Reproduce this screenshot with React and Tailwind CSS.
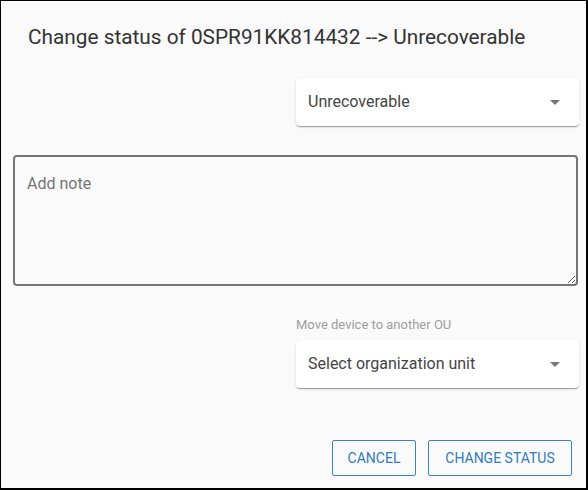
import { useState } from "react";

const STATUSES = ["Active", "Lost", "Unrecoverable"];

function Caret() {
  return (
    <svg viewBox="0 0 24 24" className="w-6 h-6 fill-[#757575] shrink-0">
      <path d="M7 10l5 5 5-5z" />
    </svg>
  );
}

function SelectBox({ value }) {
  return (
    <div className="w-[283px] h-12 bg-white rounded-[4px] shadow-[0_2px_1px_-1px_rgba(0,0,0,0.2),0_1px_1px_0_rgba(0,0,0,0.14),0_1px_3px_0_rgba(0,0,0,0.12)] flex items-center justify-between pl-3 pr-[12px]">
      <span className="text-[16px] text-[#444]">{value}</span>
      <Caret />
    </div>
  );
}

export default function App() {
  const [status] = useState(STATUSES[2]);
  const [note, setNote] = useState("");

  return (
    <div className="w-[588px] h-[490px] bg-[#fafafa] border-l border-t border-r-2 border-b-2 border-black flex flex-col font-['Roboto',sans-serif]">
      <h2 className="pt-[22px] pl-[27px] text-[20.8px] leading-7 text-[#333]">
        Change status of 0SPR91KK814432 --&gt; {status}
      </h2>

      <div className="mt-[27px] pl-[295px]">
        <SelectBox value={status} />
      </div>

      <div className="mt-[29px] pl-3 pr-2">
        <textarea
          value={note}
          onChange={e => setNote(e.target.value)}
          placeholder="Add note"
          className="block w-[565px] h-[131px] border-2 border-[#757575] rounded-[4px] bg-transparent px-3 py-[16px] text-[16px] leading-[22px] text-[#333] placeholder:text-[#757575] outline-none"
        />
      </div>

      <div className="mt-[31px] pl-[295px] text-[13px] leading-4 text-[#9e9e9e]">Move device to another OU</div>
      <div className="mt-[7px] pl-[295px]">
        <SelectBox value="Select organization unit" />
      </div>

      <div className="mt-[52px] flex justify-end gap-3 pr-[14px]">
        <button className="w-[84px] h-[36px] border border-[#3b82c4] rounded-[2px] text-[14px] text-[#2f7cc0] uppercase">
          Cancel
        </button>
        <button className="w-[144px] h-[36px] border border-[#3b82c4] rounded-[2px] text-[14px] text-[#2f7cc0] uppercase">
          Change status
        </button>
      </div>
    </div>
  );
}
